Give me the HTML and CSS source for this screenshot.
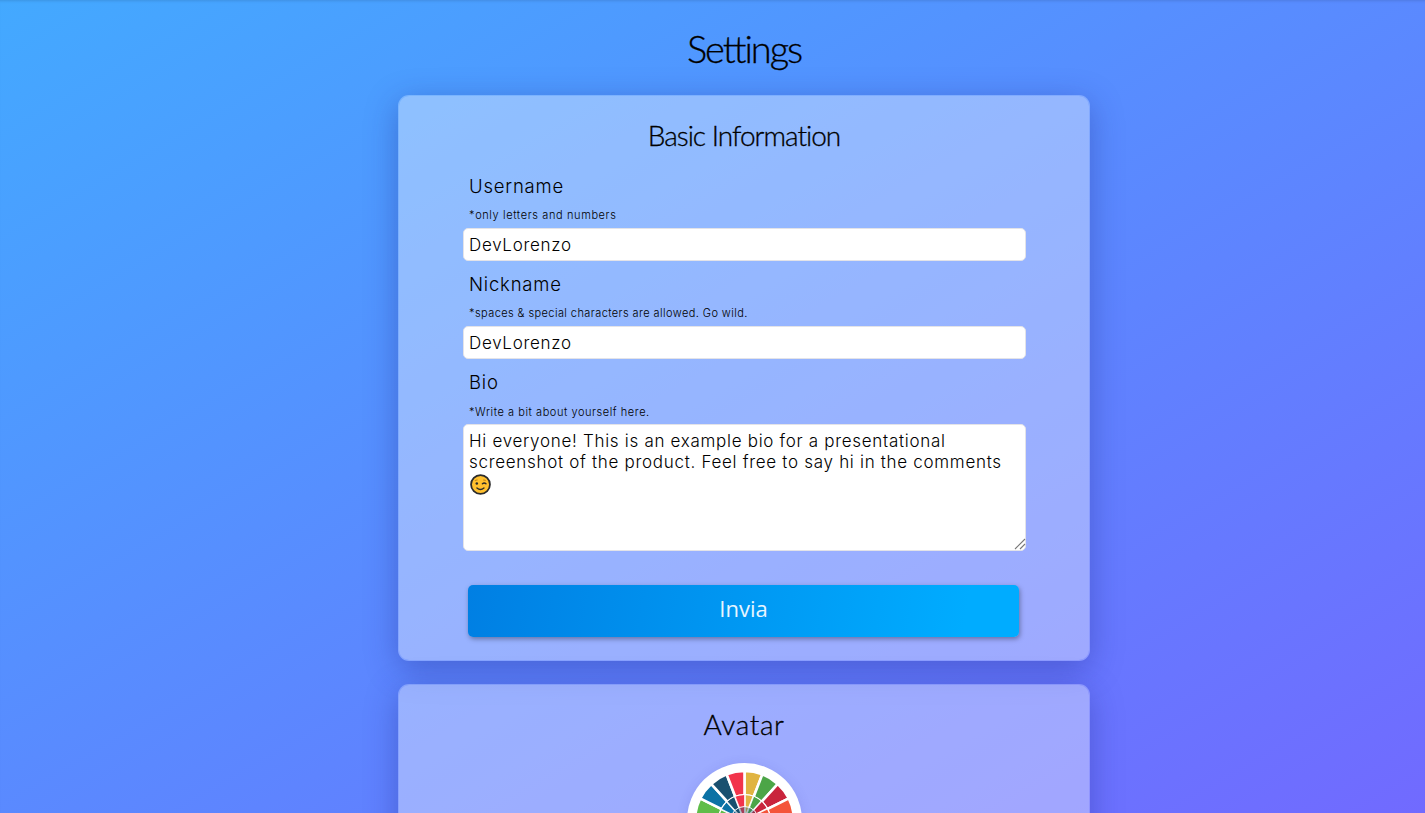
FILE: index.html
```html
<!DOCTYPE html>
<html lang="it">
<head>
  <meta charset="UTF-8" />
  <meta name="viewport" content="width=device-width, initial-scale=1.0" />
  <title>Settings</title>
  <link rel="stylesheet" href="styles.css">
</head>
<body>
  <main class="settings">
    <h1>Settings</h1>

    <section class="card">
      <h2>Basic Information</h2>
      <form class="form">
        <label for="username">Username</label>
        <small class="hint-username">*only letters and numbers</small>
        <input id="username" type="text" value="DevLorenzo" />

        <label for="nickname">Nickname</label>
        <small class="hint-nickname">*spaces &amp; special characters are allowed. Go wild.</small>
        <input id="nickname" type="text" value="DevLorenzo" />

        <label for="bio">Bio</label>
        <small class="hint-bio">*Write a bit about yourself here.</small>
        <div class="bio">
          <textarea id="bio">Hi everyone! This is an example bio for a presentational
screenshot of the product. Feel free to say hi in the comments
</textarea>
          <svg class="wink" viewBox="0 0 20 20" role="img" aria-label="wink">
            <circle cx="10" cy="10" r="9" fill="#ffc02e" stroke="#2b2b2b" stroke-width="1.7" />
            <path d="M4.6 6.5L7.2 5.4M12.6 5.6L15 6.2" stroke="#c78a18" fill="none" />
            <circle cx="6.5" cy="9" r="1.2" fill="#2b2b2b" />
            <path d="M11.8 9.3Q13.6 7.8 15.2 9.3M6.6 13.3Q10 16.3 13.3 13.3" fill="none" stroke="#2b2b2b" stroke-width="1.3" stroke-linecap="round" />
          </svg>
          <svg class="grip" viewBox="0 0 12 12">
            <path d="M1 11L11 1M6 11L11 6" fill="none" stroke="#777" stroke-width="1.1" />
          </svg>
        </div>

        <button type="button">Invia</button>
      </form>
    </section>

    <section class="card">
      <h2 class="avatar-title">Avatar</h2>
      <div class="avatar">
        <svg id="wheel" viewBox="-57.5 -57.5 115 115"></svg>
      </div>
    </section>
  </main>

  <script>
    // colour wheel, clockwise from the top
    const colors = ['#e0b441', '#4ca547', '#c9243c', '#f4543a', '#25bde2', '#fcc30b', '#a21942', '#fd6925', '#dd1367',
      '#fd9d24', '#bf8b2e', '#3f7e44', '#0a97d9', '#5fbd49', '#0b72a5', '#19506f', '#f2344b'];
    const step = Math.PI * 2 / colors.length;
    const point = (r, a) => (r * Math.sin(a)).toFixed(2) + ' ' + (-r * Math.cos(a)).toFixed(2);
    let out = '';
    colors.forEach((c, i) => {
      const a = i * step, b = a + step;
      out += `<path d="M0 0L${point(49.5, a)}A49.5 49.5 0 0 1 ${point(49.5, b)}Z" fill="${c}" stroke="#fff" stroke-width="2.6"/>`;
      out += `<path d="M0 0L${point(26, a)}A26 26 0 0 1 ${point(26, b)}Z" fill="${c}" stroke="#fff" stroke-width=".7"/>`;
    });
    out += '<circle r="26" fill="none" stroke="#fff" stroke-width="1.2"/>';
    out += '<circle r="14" fill="#19506f" fill-opacity=".35" stroke="#fff" stroke-width="1"/>';
    document.getElementById('wheel').innerHTML = out;
  </script>
</body>
</html>
```
FILE: styles.css
```css
*, *::before, *::after { box-sizing: border-box; }
html { overflow: hidden; }
body {
  margin: 0;
  height: 813px;
  overflow: hidden;
  font-family: 'Inter', sans-serif;
  font-weight: 300;
  color: #000;
  background: linear-gradient(to bottom right, #43a9ff, #716aff);
  box-shadow: inset 0 3px 3px -2px rgba(0,0,0,0.12);
}
.settings {
  width: 692px;
  margin-left: 398px;
}
h1, h2 {
  margin: 0;
  text-align: center;
  font-family: 'Lato', sans-serif;
  font-weight: 300;
  -webkit-text-stroke: 0.3px #000;
}
h1 {
  height: 95px;
  line-height: 96px;
  font-size: 38px;
  letter-spacing: -2.1px;
}
h2 {
  height: 40px;
  line-height: 38px;
  font-size: 28px;
  letter-spacing: -1px;
}
.avatar-title { letter-spacing: 0.6px; }
.card {
  margin-bottom: 23px;
  padding: 20px 64px 23px;
  border: 1px solid rgba(255,255,255,0.25);
  border-radius: 11px;
  background: rgba(255,255,255,0.37);
  background-clip: padding-box;
  box-shadow: 0 8px 32px rgba(31,38,135,0.37);
}
.form {
  display: flex;
  flex-direction: column;
  padding-top: 7px;
}
label {
  margin-top: 8px;
  padding-left: 6px;
  line-height: 30px;
  font-size: 18.5px;
  letter-spacing: 0.8px;
}
small {
  padding-left: 6px;
  height: 27px;
  line-height: 29px;
  font-size: 11px;
  font-weight: 300;
}
.hint-username { letter-spacing: 0.62px; }
.hint-nickname { letter-spacing: 0.42px; }
.hint-bio { letter-spacing: 0.56px; line-height: 31px; }
input, textarea {
  display: block;
  width: 563px;
  padding: 0 5px;
  border: 1px solid #e3e3e8;
  border-radius: 5px;
  background: #fff;
  font: 300 17px 'Inter', sans-serif;
  letter-spacing: 0.7px;
  color: #000;
}
input {
  height: 33px;
  padding-top: 1px;
}
textarea {
  height: 127px;
  padding-top: 6px;
  line-height: 21px;
  white-space: pre;
  overflow: hidden;
  resize: none;
}
.bio { position: relative; }
.wink {
  position: absolute;
  left: 7px;
  top: 50px;
  width: 21px;
  height: 21px;
}
.grip {
  position: absolute;
  left: 551px;
  top: 114px;
  width: 12px;
  height: 12px;
}
button {
  height: 52px;
  margin: 34px 6px 0 5px;
  padding: 0 0 6px;
  border: none;
  border-radius: 5px;
  background: linear-gradient(100deg, #007fe3, #00acff 90%);
  box-shadow: 1px 2px 5px rgba(0,0,0,0.35);
  color: #e8f5ff;
  font: 500 22px 'Open Sans', sans-serif;
}
.avatar {
  width: 115px;
  height: 115px;
  margin: 18px auto 0;
  border-radius: 50%;
  background: #fff;
  box-shadow: 0 2px 12px rgba(60,60,160,0.15);
}
.avatar svg { display: block; }
```
